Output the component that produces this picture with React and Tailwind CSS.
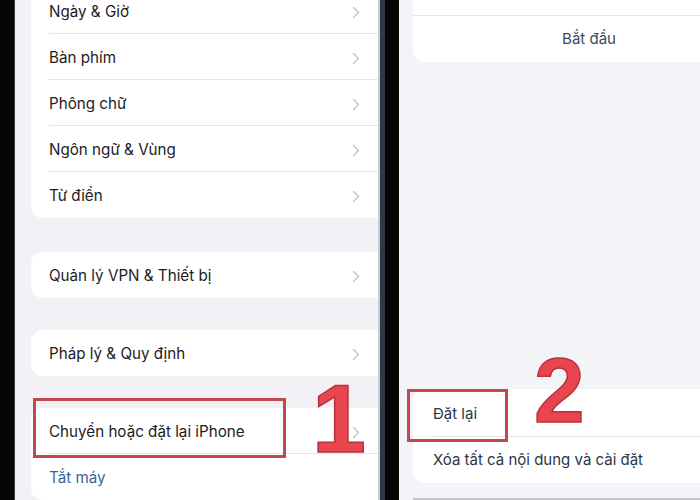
import React from "react";

const Chevron = () => (
  <svg width="8" height="13" viewBox="0 0 8 13" fill="none">
    <path d="M1.5 1.5 L6.5 6.5 L1.5 11.5" stroke="#c2c2c6" strokeWidth="1.4" strokeLinecap="round" strokeLinejoin="round" />
  </svg>
);

const Row = ({ label, last, blue, chevron = true }) => (
  <div className="relative flex h-[46px] items-center justify-between pl-[18px] pr-[18px] pt-[2px]">
    <span className={blue ? "text-[15.2px] text-[#36679a]" : "text-[15.2px] text-[#1c1c1e]"}>{label}</span>
    {chevron && <Chevron />}
    {!last && <div className="absolute bottom-0 left-[18px] right-0 h-px bg-[#e6e6ea]" />}
  </div>
);

export default function App() {
  return (
    <div
      className="flex h-[500px] w-[700px] overflow-hidden bg-black"
      style={{ fontFamily: "Inter, 'Noto Sans', sans-serif" }}
    >
      {/* left frame */}
      <div className="h-full w-[14px] bg-[#050505]" />
      <div className="h-full w-px bg-[#3a3f45]" />
      {/* left screen */}
      <div className="relative flex h-full w-[363px] flex-col overflow-hidden bg-[#f2f2f6] pl-[16px]">
        <div className="-mt-[12px] rounded-l-[12px] bg-white">
          <Row label="Ngày & Giờ" />
          <Row label="Bàn phím" />
          <Row label="Phông chữ" />
          <Row label="Ngôn ngữ & Vùng" />
          <Row label="Từ điển" last />
        </div>
        <div className="mt-[34px] rounded-l-[12px] bg-white">
          <Row label="Quản lý VPN & Thiết bị" last />
        </div>
        <div className="mt-[32px] rounded-l-[12px] bg-white">
          <Row label="Pháp lý & Quy định" last />
        </div>
        <div className="mt-[32px] rounded-l-[12px] bg-white">
          <Row label="Chuyển hoặc đặt lại iPhone" />
          <Row label="Tắt máy" blue chevron={false} last />
        </div>
        {/* annotation 1 */}
        <div className="absolute left-[18px] top-[398px] h-[60px] w-[253px] border-[3px] border-[#c6474b]" />
        <div
          className="absolute left-[297px] top-[370px] text-[97px] font-bold leading-none text-[#e8454e]"
          style={{ fontFamily: "'Liberation Sans', Arial, sans-serif", WebkitTextStroke: "1.5px #b8323b" }}
        >
          1
        </div>
      </div>
      {/* middle frame */}
      <div className="h-full w-[2px] bg-[#c9ced4]" />
      <div className="h-full w-[5px] bg-[#2c3846]" />
      <div className="h-full w-[14px] bg-[#050505]" />
      {/* right screen */}
      <div className="relative flex h-full flex-1 flex-col overflow-hidden bg-[#f3f4f7] pl-[14px]">
        <div className="-mt-[30px] w-[352px] shrink-0 rounded-bl-[12px] bg-white">
          <div className="h-[46px] border-b border-[#e8e8ec]" />
          <div className="flex h-[46px] items-center justify-center pt-[1px] text-[15px] text-[#3b4a5e]">Bắt đầu</div>
        </div>
        <div className="flex-1" />
        <div className="w-[352px] shrink-0 rounded-l-[12px] bg-white">
          <div className="relative flex h-[48px] items-center pl-[20px] pt-[2px] text-[15px] text-[#2b3646]">
            Đặt lại
            <div className="absolute bottom-0 left-[20px] right-0 h-px bg-[#e6e6ea]" />
          </div>
          <div className="flex h-[46px] items-center pl-[20px] pt-[1px] text-[15px] text-[#2b3646]">
            Xóa tất cả nội dung và cài đặt
          </div>
        </div>
        <div className="h-[15px] shrink-0" />
        <div className="h-[2px] shrink-0 bg-[#c4c6ca]" />
        {/* annotation 2 */}
        <div className="absolute left-[8px] top-[389px] h-[53px] w-[101px] border-[3px] border-[#c6474b]" />
        <div
          className="absolute left-[135px] top-[345px] text-[91px] font-bold leading-none text-[#e8454e]"
          style={{ fontFamily: "'Liberation Sans', Arial, sans-serif", WebkitTextStroke: "1.5px #b8323b" }}
        >
          2
        </div>
      </div>
    </div>
  );
}
